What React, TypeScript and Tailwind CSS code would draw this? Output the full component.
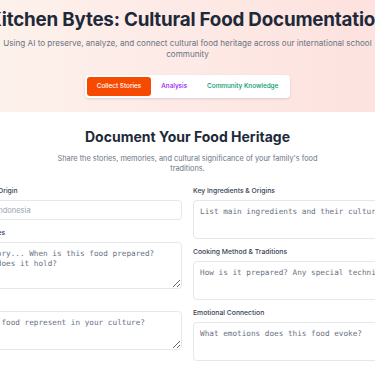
import React from 'react';

const sans = { fontFamily: 'Inter, "Noto Sans", sans-serif' };

const Label: React.FC<{ children: React.ReactNode }> = ({ children }) => (
  <label className="block mb-[4px] text-[6.8px] leading-[10px] font-medium text-gray-700 whitespace-nowrap">{children}</label>
);

const Area: React.FC<{ placeholder: string; tall?: boolean }> = ({ placeholder, tall }) => (
  <textarea
    placeholder={placeholder}
    className={`block w-full ${tall ? 'h-[47px]' : 'h-[39px]'} rounded-[4px] border border-gray-200 bg-white px-[6px] py-[6px] text-[7.7px] leading-[10px] text-gray-700 placeholder:text-gray-500 font-['DejaVu_Sans_Mono',monospace] outline-none`}
  />
);

export default function App() {
  return (
    <div className="w-[375px] h-[366px] overflow-hidden bg-white flex flex-col items-center" style={sans}>
      <header className="w-[375px] shrink-0 flex flex-col items-center pt-[6px] pb-[14px] bg-gradient-to-r from-[#fdf1ec] to-[#fde2df]">
        <h1 className="whitespace-nowrap text-[18.8px] leading-[28px] font-bold text-gray-800 tracking-[-0.2px]">
          Kitchen Bytes: Cultural Food Documentation
        </h1>
        <p className="mt-[4px] w-[372px] shrink-0 text-center text-[8.1px] leading-[11px] text-gray-500">
          Using AI to preserve, analyze, and connect cultural food heritage across our international school community
        </p>
        <nav className="mt-[15px] flex items-center p-[2px] bg-white rounded-[4px] shadow-sm">
          <button className="h-[19px] px-[10px] rounded-[3px] bg-orange-600 text-white text-[6.4px] font-medium">Collect Stories</button>
          <button className="h-[19px] px-[10px] rounded-[3px] text-purple-600 text-[6.4px] font-medium">Analysis</button>
          <button className="h-[19px] px-[10px] rounded-[3px] text-emerald-600 text-[6.4px] font-medium">Community Knowledge</button>
        </nav>
      </header>

      <main className="shrink-0 flex flex-col items-center pt-[15px]">
        <h2 className="text-[14px] leading-[20px] font-bold text-gray-800">Document Your Food Heritage</h2>
        <p className="mt-[7px] w-[272px] text-center text-[7.35px] leading-[10px] text-gray-500">
          Share the stories, memories, and cultural significance of your family's food traditions.
        </p>

        <form className="mt-[12px] w-[525px] grid grid-cols-2 gap-x-[11px]">
          <div className="flex flex-col gap-[8px]">
            <div>
              <Label>Country or Regions of Origin</Label>
              <input
                placeholder="e.g., Japan, Peru, Indonesia"
                className="block w-full h-[20px] rounded-[4px] border border-gray-200 bg-white px-[6px] text-[7.5px] text-gray-700 placeholder:text-gray-400 outline-none"
              />
            </div>
            <div>
              <Label>Your Stories & Memories</Label>
              <Area tall placeholder="Tell us the story... When is this food prepared? What memories does it hold?" />
            </div>
            <div>
              <Label>Cultural Meaning</Label>
              <Area placeholder="What does this food represent in your culture?" />
            </div>
          </div>
          <div className="flex flex-col gap-[8px]">
            <div>
              <Label>Key Ingredients & Origins</Label>
              <Area placeholder="List main ingredients and their cultural origins..." />
            </div>
            <div>
              <Label>Cooking Method & Traditions</Label>
              <Area placeholder="How is it prepared? Any special techniques..." />
            </div>
            <div>
              <Label>Emotional Connection</Label>
              <Area placeholder="What emotions does this food evoke?" />
            </div>
          </div>
        </form>
      </main>
    </div>
  );
}
